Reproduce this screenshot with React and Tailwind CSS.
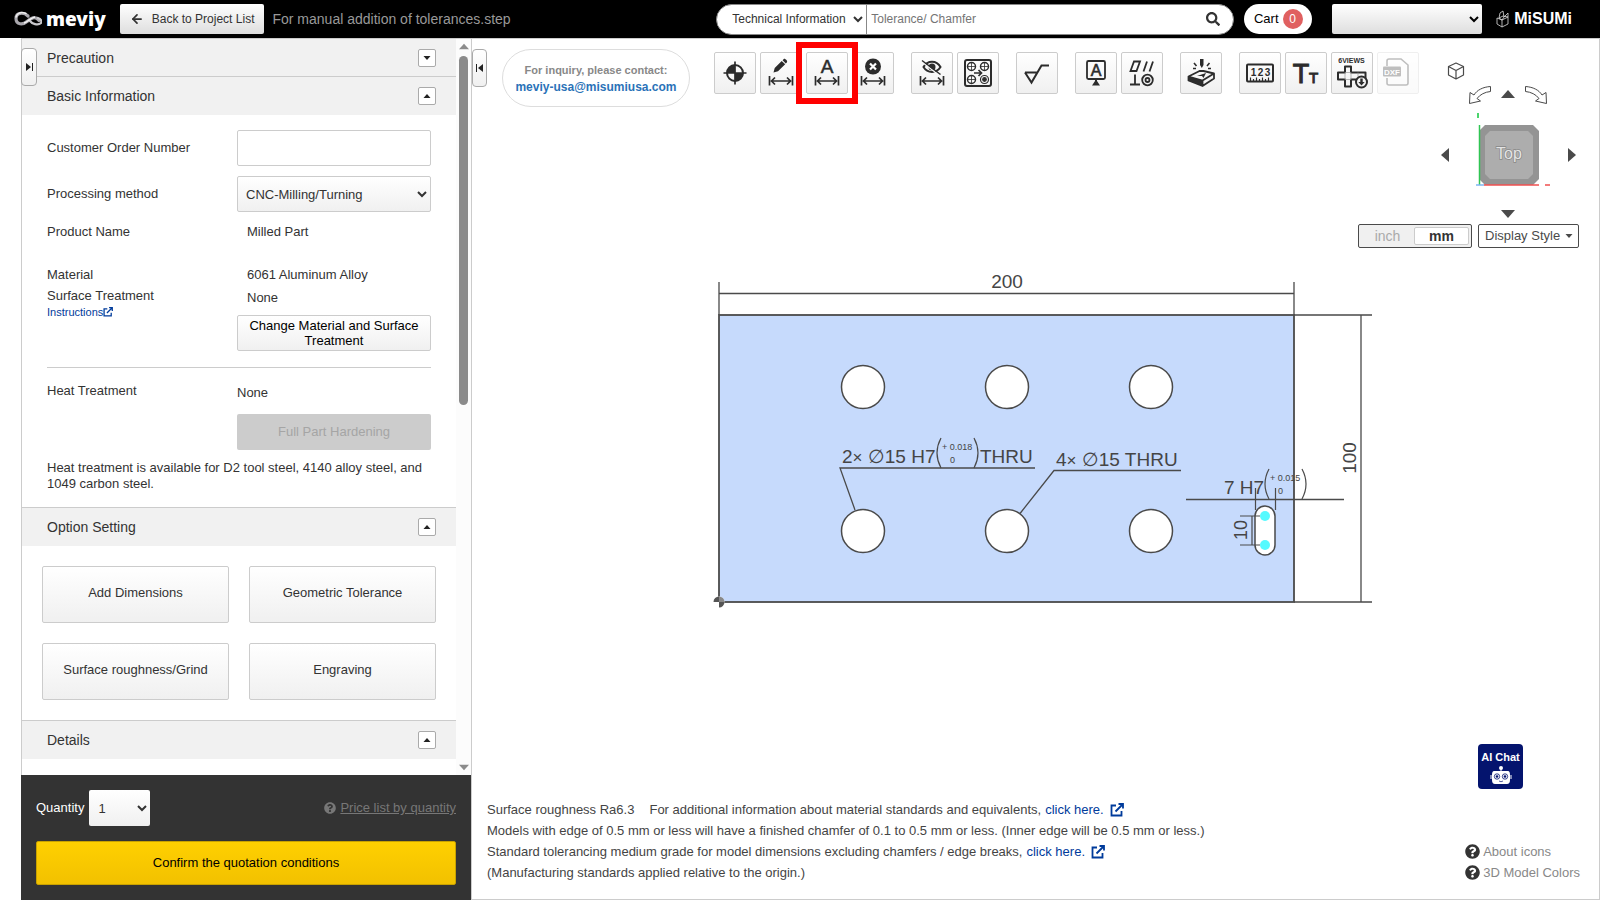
import { useState } from "react";
import { FaSearch, FaQuestionCircle } from "react-icons/fa";
import { ArrowLeft } from "lucide-react";
import clsx from "clsx";

const GRADIENT = "bg-linear-to-b from-white to-[#f0f0f0] border border-[#ccc] rounded-xs";

function Triangle({ dir = "up", className }) {
    const points = {
        up: "0,8 7,0 14,8",
        down: "0,0 14,0 7,8",
        left: "8,0 8,14 0,7",
        right: "0,0 8,7 0,14",
    };
    const vertical = dir === "up" || dir === "down";
    return (
        <svg viewBox={vertical ? "0 0 14 8" : "0 0 8 14"} className={className} fill="currentColor" aria-hidden="true">
            <polygon points={points[dir]} />
        </svg>
    );
}

function OpenIcon({ className }) {
    return (
        <svg viewBox="0 0 14 14" className={className} fill="none" stroke="currentColor" strokeWidth="1.800" aria-hidden="true">
            <path d="M6 2.500H1.500v10h10V8M5.500 8.500l7-7M8.500 1H13v4.500" />
        </svg>
    );
}

function MeviyLogo() {
    return (
        <a href="#" className="flex items-center gap-1 text-white" aria-label="meviy home">
            <svg viewBox="0 0 28 16" className="w-7 h-4" fill="none" aria-hidden="true">
                <path d="M14 5C10 1 2 1 2 7.500s7 6.500 11 3 8-6 12-1" stroke="#a9a7ad" strokeWidth="3.200" strokeLinecap="round" />
                <path d="M12 2.500C7 .5 3 2 2 6" stroke="#eee" strokeWidth="1.500" strokeLinecap="round" />
                <path d="M15 9c3 4 9 6 12 3 1-2 0-4-3-5" stroke="#c9c8cc" strokeWidth="2.200" strokeLinecap="round" />
                <path d="M10 12c4-1 6-5 11-6" stroke="#f4f4f4" strokeWidth="1.400" />
            </svg>
            <span className="font-['Noto_Sans'] font-black text-[19px] leading-5">meviy</span>
        </a>
    );
}

function MisumiLogo() {
    return (
        <a href="#" className="flex items-center gap-1 text-white" aria-label="MISUMI">
            <svg viewBox="0 0 14 18" className="w-[14px] h-[18px]" fill="none" stroke="#ddd" strokeWidth="0.800" aria-hidden="true">
                <path d="M1 8l5 2v7l-5-3zM6 10l6-3v7l-6 3M4 3l3-2 1 6-2 3-3-2zM8 7l4-4v4M3 8l4-2 5 1" />
            </svg>
            <span className="font-bold text-base leading-5">MiSUMi</span>
        </a>
    );
}

function Header() {
    return (
        <header className="h-[38px] shrink-0 bg-black flex items-center pl-[14px] pr-7">
            <MeviyLogo />
            <button className="ml-[14px] h-[30px] px-[10px] flex items-center gap-2 rounded-xs bg-linear-to-b from-white to-[#dedede] text-xs text-[#333]">
                <ArrowLeft size={14} strokeWidth={3} />
                Back to Project List
            </button>
            <span className="ml-2 text-sm text-[#999]">For manual addition of tolerances.step</span>
            <div className="ml-auto flex items-center">
                <form className="w-[518px] h-[31px] flex items-center bg-white border border-[#888] rounded-full overflow-hidden" onSubmit={(e) => e.preventDefault()}>
                    <select aria-label="Search category" className="w-[150px] h-full pl-[11px] pr-[2px] text-xs text-[#333] border-r border-[#888]">
                        <option>Technical Information</option>
                    </select>
                    <input type="text" aria-label="Search" placeholder="Tolerance/ Chamfer" className="flex-1 h-full px-1 text-xs outline-none placeholder:text-[#757575]" />
                    <button aria-label="Run search" className="px-[13px] text-[#333]">
                        <FaSearch size={14} />
                    </button>
                </form>
                <a href="#" className="ml-[10px] h-[30px] w-[68px] flex items-center justify-center gap-1 rounded-full bg-white text-[13px] text-black">
                    Cart
                    <span className="w-5 h-5 rounded-full bg-[#e06060] text-white text-xs flex items-center justify-center">0</span>
                </a>
                <select aria-label="Account" className="ml-5 w-[150px] h-[30px] px-[6px] rounded-xs bg-linear-to-b from-white to-[#dedede] text-[13px]">
                    <option></option>
                </select>
                <div className="ml-[14px]">
                    <MisumiLogo />
                </div>
            </div>
        </header>
    );
}

function SectionHeader({ title, open, onToggle, first }) {
    return (
        <div className={clsx("pl-[25px] pr-5 flex items-center justify-between bg-[#f1f1f1]", first ? "h-[37px]" : "h-[39px] border-t border-[#ccc]")}>
            <h2 className="text-sm text-[#333]">{title}</h2>
            <button onClick={onToggle} aria-label={`Toggle ${title}`} className="w-[18px] h-[18px] flex items-center justify-center bg-white border border-[#aaa] rounded-xs text-[#222]">
                <Triangle dir={open ? "up" : "down"} className="w-2 h-1" />
            </button>
        </div>
    );
}

function BasicInformation() {
    return (
        <div className="px-[25px] py-[15px] text-[13px] leading-4 text-[#333]">
            <div className="grid grid-cols-[190px_1fr] items-center">
                <label htmlFor="order-number">Customer Order Number</label>
                <input id="order-number" type="text" className="h-9 w-full px-2 border border-[#ccc] rounded-xs" />
            </div>
            <div className="mt-[10px] grid grid-cols-[190px_1fr] items-center">
                <label htmlFor="method">Processing method</label>
                <select id="method" className={`h-9 w-full pl-1 pr-2 ${GRADIENT}`}>
                    <option>CNC-Milling/Turning</option>
                </select>
            </div>
            <div className="mt-3 grid grid-cols-[190px_1fr]">
                <span>Product Name</span>
                <span className="pl-[10px]">Milled Part</span>
            </div>
            <div className="mt-[27px] grid grid-cols-[190px_1fr]">
                <div>
                    <p>Material</p>
                    <p className="mt-[5px]">Surface Treatment</p>
                    <a href="#" className="mt-px flex items-center text-[11px] leading-[14px] text-[#003b9b]">
                        Instructions
                        <OpenIcon className="w-[10px] h-[10px]" />
                    </a>
                </div>
                <div>
                    <p className="pl-[10px]">6061 Aluminum Alloy</p>
                    <p className="mt-[7px] pl-[10px]">None</p>
                    <button className={`mt-[9px] h-9 w-full px-2 leading-[15px] text-black ${GRADIENT}`}>
                        Change Material and Surface Treatment
                    </button>
                </div>
            </div>
            <hr className="mt-4 border-[#ccc]" />
            <div className="mt-[15px] grid grid-cols-[190px_1fr]">
                <span>Heat Treatment</span>
                <div>
                    <p className="mt-[2px]">None</p>
                    <button disabled className="mt-[13px] h-9 w-full rounded-xs bg-[#ccc] text-[#a5a5a5]">
                        Full Part Hardening
                    </button>
                </div>
            </div>
            <p className="mt-[10px]">Heat treatment is available for D2 tool steel, 4140 alloy steel, and 1049 carbon steel.</p>
        </div>
    );
}

const options = ["Add Dimensions", "Geometric Tolerance", "Surface roughness/Grind", "Engraving"];

function Sidebar() {
    const [open, setOpen] = useState({ precaution: false, basic: true, option: true, details: true });
    const toggle = (key) => setOpen({ ...open, [key]: !open[key] });

    return (
        <aside className="relative w-[450px] shrink-0 flex flex-col border-l border-t border-[#ccc]">
            <div className="flex-1 min-h-0 flex">
                <div className="flex-1 overflow-hidden">
                    <SectionHeader first title="Precaution" open={open.precaution} onToggle={() => toggle("precaution")} />
                    <SectionHeader title="Basic Information" open={open.basic} onToggle={() => toggle("basic")} />
                    {open.basic && <BasicInformation />}
                    <SectionHeader title="Option Setting" open={open.option} onToggle={() => toggle("option")} />
                    {open.option && (
                        <div className="p-5 grid grid-cols-2 gap-5">
                            {options.map((name) => (
                                <button key={name} className={`h-[57px] pb-1 text-[13px] text-[#333] ${GRADIENT}`}>
                                    {name}
                                </button>
                            ))}
                        </div>
                    )}
                    <SectionHeader title="Details" open={open.details} onToggle={() => toggle("details")} />
                </div>
                {/* scroll rail */}
                <div className="w-[15px] flex flex-col items-center justify-between bg-[#fcfcfc] text-[#8b8b8b] py-1">
                    <div className="flex flex-col items-center gap-[6px] h-[362px]">
                        <Triangle dir="up" className="w-[10px] h-[7px]" />
                        <div className="w-[9px] flex-1 rounded-full bg-[#8b8b8b]" />
                    </div>
                    <Triangle dir="down" className="w-[10px] h-[7px]" />
                </div>
            </div>
            <footer className="-ml-px bg-[#333] p-[15px]">
                <div className="flex items-center text-[13px] text-white">
                    <label htmlFor="quantity">Quantity</label>
                    <select id="quantity" className="ml-[5px] w-[61px] h-9 px-[5px] rounded-xs bg-linear-to-b from-white to-[#f0f0f0] text-[#333]">
                        <option>1</option>
                    </select>
                    <a href="#" className="ml-auto flex items-center gap-1 text-[#777]">
                        <FaQuestionCircle size={12} />
                        <span className="underline">Price list by quantity</span>
                    </a>
                </div>
                <button className="mt-[15px] w-full h-11 rounded-xs border border-[#c9a200] bg-linear-to-b from-[#ffd000] to-[#f2c100] text-[13px] text-black">
                    Confirm the quotation conditions
                </button>
            </footer>
            <button aria-label="Collapse panel" className={`absolute -left-px top-[9px] w-4 h-[38px] flex items-center justify-center text-[#222] rounded-sm! border-[#aaa]! ${GRADIENT}`}>
                <svg viewBox="0 0 7 8" className="w-[7px] h-2" fill="currentColor"><path d="M0 0l5 4-5 4zM6 0h1v8H6z" /></svg>
            </button>
        </aside>
    );
}

const DimensionMark = () => (
    <path d="M9.500 24v9.500M32.500 24v9.500M11 29h20M15 25.500L11.500 29l3.500 3.500M27 25.500l3.500 3.500-3.500 3.500" fill="none" stroke="currentColor" strokeWidth="1.700" />
);

function IconText({ children, ...props }) {
    return (
        <text textAnchor="middle" fill="currentColor" stroke="none" {...props}>
            {children}
        </text>
    );
}

const icons = {
    origin: (
        <>
            <circle cx="21" cy="21" r="8" fill="none" stroke="currentColor" strokeWidth="2" />
            <path d="M21 21v-8a8 8 0 0 0-8 8zM21 21v8a8 8 0 0 0 8-8z" />
            <path d="M21 9.500v23M9.500 21h23" stroke="currentColor" strokeWidth="1.700" />
        </>
    ),
    edit: (
        <>
            <path d="M13.500 20.500l1.200-4.500 7-7 3.500 3.300-7.200 7zM22.600 8.200l1.200-1.200c1-1 4.200 2 3.200 3.200l-1.200 1.200z" />
            <DimensionMark />
        </>
    ),
    auto: (
        <>
            <IconText x="21" y="20.500" fontSize="19" strokeWidth="0.500" stroke="currentColor">A</IconText>
            <DimensionMark />
        </>
    ),
    remove: (
        <>
            <circle cx="21" cy="14.500" r="8" />
            <path d="M18 11.500l6 6M24 11.500l-6 6" stroke="#fff" strokeWidth="2.200" />
            <DimensionMark />
        </>
    ),
    hide: (
        <>
            <path d="M12.500 15c4-7 13-7 17 0-4 6.500-13 6.500-17 0z" fill="none" stroke="currentColor" strokeWidth="2" />
            <circle cx="21" cy="15" r="3.500" />
            <path d="M11 10l17.500 13.500" stroke="#f7f7f7" strokeWidth="1.500" />
            <path d="M11 8.500l18.500 14" stroke="currentColor" strokeWidth="1.500" />
            <DimensionMark />
        </>
    ),
    pattern: (
        <g fill="none" stroke="currentColor" strokeWidth="1.200">
            <rect x="8" y="8" width="26" height="26" rx="2" strokeWidth="2" />
            <circle cx="14.500" cy="14.500" r="4" strokeWidth="1.500" />
            <circle cx="27.500" cy="14.500" r="4" strokeWidth="1.500" />
            <circle cx="14.500" cy="27.500" r="4" strokeWidth="1.500" />
            <circle cx="27.500" cy="27.500" r="4" />
            <circle cx="27.500" cy="27.500" r="1.800" fill="currentColor" />
            <path d="M14.500 10v9M10 14.500h9M27.500 10v9M23 14.500h9M14.500 23v9M10 27.500h9" strokeWidth="0.800" />
            <path d="M17 21h7M21.500 18l3 3-3 3" strokeWidth="1.700" />
        </g>
    ),
    roughness: <path d="M9 20.500h12.500M9 20.500l6.500 10L25.500 13.500H33" fill="none" stroke="currentColor" strokeWidth="2" />,
    datum: (
        <>
            <rect x="12" y="9" width="18" height="18" rx="1.500" fill="none" stroke="currentColor" strokeWidth="1.800" />
            <IconText x="21" y="24" fontSize="16" stroke="currentColor" strokeWidth="0.600">A</IconText>
            <path d="M20 27h2v2l3 4.500h-8l3-4.500z" />
        </>
    ),
    geometric: (
        <g fill="none" stroke="currentColor" strokeWidth="1.800">
            <path d="M9.500 19l3.500-9.500h6L15.500 19zM22.500 19.500l3.500-10M28.500 19.500l3.500-10M14 22.500V32M9 32.500h10" />
            <circle cx="26.500" cy="28" r="5.300" />
            <circle cx="26.500" cy="28" r="2" />
        </g>
    ),
    engrave: (
        <>
            <path d="M20 7h3.500v6l-1.700 3-1.800-3z" />
            <path d="M14 11l2.500 3M29.500 11L27 14M16 16.500h-3M28 16.500h3" stroke="currentColor" strokeWidth="1.600" />
            <path d="M8.500 24.500l11-5.500h4L34 21.500 22.500 28.500zM8.500 24.500v4L22.500 34 34 26.500v-5M22.500 28.500V34" fill="none" stroke="currentColor" strokeWidth="1.800" strokeLinejoin="round" />
            <path d="M8.500 24.500l14 4V34l-14-5.500z" />
            <path d="M17 24l9-3-2.500 5-1.500-2z" />
        </>
    ),
    measure: (
        <>
            <rect x="8" y="12.500" width="26" height="17" rx="1" fill="none" stroke="currentColor" strokeWidth="2" />
            {["1", "2", "3"].map((n, i) => (
                <IconText key={n} x={14.5 + i * 7} y="23.500" fontSize="10" fontWeight="bold">{n}</IconText>
            ))}
            <path d="M11.500 25.500v4M14.500 27v2.500M17.500 25.500v4M20.500 27v2.500M23.500 25.500v4M26.500 27v2.500M29.500 25.500v4" stroke="currentColor" strokeWidth="1.200" />
        </>
    ),
    text: (
        <g stroke="currentColor" strokeWidth="1">
            <IconText x="16" y="30.500" fontSize="27" stroke="currentColor">T</IconText>
            <IconText x="28.500" y="30.500" fontSize="15" stroke="currentColor">T</IconText>
        </g>
    ),
    views: (
        <>
            <IconText x="20.500" y="11" fontSize="7" fontWeight="bold">6VIEWS</IconText>
            <path d="M14 14.500h6v6h14.500v7H20v7h-6v-7H7v-7h7z" fill="none" stroke="currentColor" strokeWidth="2" strokeLinejoin="round" />
            <path d="M14 20.500h6v7h-6zM27 20.500v7" fill="none" stroke="#999" strokeWidth="0.700" />
            <circle cx="30.500" cy="30" r="5.500" fill="#f4f4f4" stroke="currentColor" strokeWidth="2" />
            <path d="M29.300 26.500h2.400v3.500h2l-3.200 3.500-3.200-3.500h2z" />
        </>
    ),
    dxf: (
        <>
            <path d="M10 14V9q0-2 2-2h12l7 6v18q0 2-2 2H12q-2 0-2-2v-5" fill="none" stroke="currentColor" strokeWidth="1.600" />
            <rect x="6" y="14.500" width="18" height="10" rx="1" />
            <text x="15" y="22.500" textAnchor="middle" fontSize="8" fontWeight="bold" fill="#fff">DXF</text>
        </>
    ),
};

const toolGroups = [
    [
        { id: "origin", label: "Set origin" },
        { id: "edit", label: "Edit dimension" },
        { id: "auto", label: "Add tolerance", active: true },
        { id: "remove", label: "Delete dimension" },
    ],
    [
        { id: "hide", label: "Hide dimensions" },
        { id: "pattern", label: "Hole pattern" },
    ],
    [{ id: "roughness", label: "Surface roughness" }],
    [
        { id: "datum", label: "Datum" },
        { id: "geometric", label: "Geometric tolerance" },
    ],
    [{ id: "engrave", label: "Engraving" }],
    [
        { id: "measure", label: "Measure" },
        { id: "text", label: "Text size" },
        { id: "views", label: "Six views" },
        { id: "dxf", label: "Export DXF", disabled: true },
    ],
];

function Toolbar() {
    return (
        <div className="flex gap-[17px]">
            {toolGroups.map((group) => (
                <div key={group[0].id} className="flex gap-1">
                    {group.map((tool) => (
                        <div key={tool.id} className="relative">
                            <button
                                aria-label={tool.label}
                                disabled={tool.disabled}
                                className={clsx("block w-[42px] h-[42px] text-[#2c2c2c] disabled:opacity-30", GRADIENT)}
                            >
                                <svg viewBox="1 1 40 40" className="w-10 h-10" fill="currentColor" fontFamily="Liberation Sans, sans-serif">
                                    {icons[tool.id]}
                                </svg>
                            </button>
                            {tool.active && <span className="absolute -inset-[10px] z-10 border-6 border-[#f00] pointer-events-none" />}
                        </div>
                    ))}
                </div>
            ))}
        </div>
    );
}

function ViewCube() {
    return (
        <svg viewBox="0 0 76 64" className="w-[76px] h-16" role="img" aria-label="Top view">
            <path d="M10 2h48l6 6v48l-6 6H10l-6-6V8z" fill="#949494" />
            <path d="M15 8h38l5 5v38l-5 5H15l-5-5V13z" fill="#adadad" />
            <text x="34" y="36" textAnchor="middle" fontSize="16" fill="#e4e4e4" stroke="#888" strokeWidth="1.500" paintOrder="stroke" fontFamily="Liberation Sans, sans-serif">Top</text>
            <path d="M4.500 2v60" stroke="#2fc552" strokeWidth="1.500" />
            <path d="M1 62h8" stroke="#7eb6f2" strokeWidth="1.500" />
            <path d="M9 62h55M70 62h5" stroke="#f05050" strokeWidth="1.500" />
        </svg>
    );
}

function CurvedArrow({ flip }) {
    return (
        <svg viewBox="0 0 24 20" className={clsx("w-6 h-5", flip && "-scale-x-100")} fill="#fff" stroke="#4a4a4a" strokeWidth="1">
            <path d="M22.500 1.500C15 2 9 5 6 10L2 7.500 1.500 18.500 12.500 16 9 13.500c3-4 8-6.500 13.500-7z" />
        </svg>
    );
}

function ViewControls() {
    const [unit, setUnit] = useState("mm");
    return (
        <div className="mt-[13px] w-[222px] flex flex-col items-end text-[#4a4a4a]">
            <div className="w-[142px] flex flex-col">
                <button aria-label="Isometric view" className="ml-[10px] w-[18px] h-[18px]">
                    <svg viewBox="0 0 18 18" className="w-[18px] h-[18px]" fill="none" stroke="currentColor" strokeWidth="1.200" strokeLinejoin="round">
                        <path d="M9 1l7.500 3.500v8.500L9 17l-7.500-4V4.500zM1.500 4.500L9 8.500l7.500-4M9 8.500V17" />
                    </svg>
                </button>
                <div className="mt-[5px] flex items-start justify-center gap-[9px]">
                    <button aria-label="Rotate left"><CurvedArrow /></button>
                    <button aria-label="Rotate up" className="mt-[5px]"><Triangle dir="up" className="w-[14px] h-2" /></button>
                    <button aria-label="Rotate right"><CurvedArrow flip /></button>
                </div>
                <span className="ml-10 mt-2 w-[2px] h-[5px] bg-[#4bd56c]" />
                <div className="mt-[5px] flex items-center justify-between pl-1 pr-[3px]">
                    <button aria-label="Turn left"><Triangle dir="left" className="w-2 h-[14px]" /></button>
                    <div className="ml-2"><ViewCube /></div>
                    <button aria-label="Turn right"><Triangle dir="right" className="w-2 h-[14px]" /></button>
                </div>
                <button aria-label="Rotate down" className="mt-[23px] mx-auto"><Triangle dir="down" className="w-[14px] h-2" /></button>
            </div>
            <div className="mt-[6px] flex gap-[6px] text-sm">
                <div className="w-[114px] h-6 p-[2px] flex rounded-xs border border-[#4a4a4a] bg-[#f0f0f0]">
                    {["inch", "mm"].map((u) => (
                        <button
                            key={u}
                            onClick={() => setUnit(u)}
                            className={clsx("flex-1 leading-4 rounded-xs", unit === u ? "bg-white border border-[#ccc] font-bold text-[#333]" : "text-[#aaa]")}
                        >
                            {u}
                        </button>
                    ))}
                </div>
                <button className="w-[101px] h-6 pl-[6px] pr-[5px] flex items-center justify-between rounded-xs border border-[#4a4a4a] bg-white text-[13px]">
                    Display Style
                    <Triangle dir="down" className="w-2 h-1" />
                </button>
            </div>
        </div>
    );
}

const holes = [863, 1007, 1151].flatMap((x) => [387, 531].map((y) => ({ x, y })));

function Tolerance({ x, y, value }) {
    return (
        <g>
            <path d={`M${x + 4} ${y - 25}q-8 15 0 30M${x + 37} ${y - 25}q8 15 0 30`} fill="none" strokeWidth="1.200" />
            <g stroke="none" fontSize="9">
                <text x={x + 5} y={y - 13}>+ {value}</text>
                <text x={x + 13} y={y}>0</text>
            </g>
        </g>
    );
}

function Drawing() {
    return (
        <svg viewBox="685 260 700 360" className="w-[700px] h-[360px]" fill="#454545" stroke="#4a4a4a" fontFamily="Liberation Sans, sans-serif" fontSize="19" role="img" aria-label="Part drawing">
            <rect x="719" y="315" width="575" height="287" fill="#c6dafc" strokeWidth="1.800" />
            {holes.map(({ x, y }) => (
                <circle key={`${x}-${y}`} cx={x} cy={y} r="21.500" fill="#fff" strokeWidth="1.500" />
            ))}
            <rect x="1255" y="506" width="20" height="49" rx="10" fill="#fff" strokeWidth="1.500" />

            {/* overall dimensions */}
            <path d="M719 282v33M1294 282v33M719 293.500h575M1294 315h78M1294 602h78M1361 315v287" fill="none" strokeWidth="1.300" />
            <g stroke="none">
                <text x="1007" y="288" textAnchor="middle">200</text>
                <text transform="translate(1356 458) rotate(-90)" textAnchor="middle">100</text>
                <text x="842" y="463">2<tspan fontSize="17">×</tspan> ∅15 H7</text>
                <text x="980" y="463">THRU</text>
                <text x="1056" y="466">4<tspan fontSize="17">×</tspan> ∅15 THRU</text>
                <text x="1224" y="494">7 H7</text>
                <text transform="translate(1247 530) rotate(-90)" textAnchor="middle" fontSize="18">10</text>
            </g>

            {/* leaders */}
            <path d="M1035 468H840l15 42M1181 470.500h-127l-34 43M1186 499.500h158" fill="none" strokeWidth="1.300" />
            <path d="M1255.500 488v22M1275.500 488v22M1240 516h20M1240 545h20M1252 516v29" fill="none" strokeWidth="1.200" />
            <Tolerance x={937} y={463} value="0.018" />
            <Tolerance x={1265} y={494} value="0.015" />

            <g stroke="none">
                <circle cx="1265" cy="516" r="5" fill="#55faff" />
                <circle cx="1265" cy="545" r="5" fill="#55faff" />
                <circle cx="719" cy="602" r="5.500" fill="#fff" />
                <path d="M719 602v-5.500a5.500 5.500 0 0 0-5.500 5.500zM719 602v5.500a5.500 5.500 0 0 0 5.500-5.500z" fill="#555" />
                <path d="M719 602v-5.500a5.500 5.500 0 0 1 5.500 5.500z" fill="#888" />
            </g>
        </svg>
    );
}

function AiChatButton() {
    return (
        <button className="w-[45px] h-[45px] flex flex-col items-center rounded-sm bg-[#04146e] text-white pt-[5px]">
            <span className="font-bold text-[11px] leading-4 whitespace-nowrap">AI Chat</span>
            <svg viewBox="0 0 22 20" className="w-[22px] h-5" aria-hidden="true">
                <circle cx="11" cy="3" r="2" fill="#fff" />
                <path d="M10.500 4h1v3h-1z" fill="#fff" />
                <path d="M4 6h14q2 0 2 4v5q0 4-3 4H5q-3 0-3-4v-5q0-4 2-4zM.5 10h1v4h-1zM20.500 10h1v4h-1z" fill="#fff" />
                <circle cx="7" cy="11.500" r="2.700" fill="#fff" stroke="#04146e" strokeWidth="0.800" />
                <circle cx="15" cy="11.500" r="2.700" fill="#fff" stroke="#04146e" strokeWidth="0.800" />
                <circle cx="7" cy="11.500" r="1.300" fill="#04146e" />
                <circle cx="15" cy="11.500" r="1.300" fill="#04146e" />
                <path d="M9 16q2 1.500 4 0" fill="none" stroke="#04146e" strokeWidth="0.700" />
            </svg>
        </button>
    );
}

function NoteLink() {
    return (
        <a href="#" className="inline-flex items-center gap-[6px] ml-1 text-[#003b9b] align-top">
            click here.
            <OpenIcon className="w-[14px] h-[14px]" />
        </a>
    );
}

function Workspace() {
    return (
        <main className="relative flex-1 min-w-0 flex flex-col border border-[#ccc]">
            <button aria-label="Collapse side panel" className={`absolute left-0 top-[10px] w-[15px] h-[38px] flex items-center justify-center text-[#222] rounded-sm! border-[#aaa]! ${GRADIENT}`}>
                <svg viewBox="0 0 7 8" className="w-[7px] h-2" fill="currentColor"><path d="M7 0L2 4l5 4zM0 0h1v8H0z" /></svg>
            </button>
            <div className="flex items-start pl-[30px] pr-5 pt-[10px]">
                <div className="w-[188px] h-[58px] shrink-0 flex flex-col items-center justify-center rounded-full border border-[#ddd] font-bold leading-[18px] whitespace-nowrap">
                    <span className="text-[11px] text-[#888]">For inquiry, please contact:</span>
                    <a href="mailto:meviy-usa@misumiusa.com" className="text-xs text-[#2a72b8]">meviy-usa@misumiusa.com</a>
                </div>
                <div className="ml-6 mt-[3px]">
                    <Toolbar />
                </div>
                <div className="flex-1 flex justify-end -ml-[70px]">
                    <ViewControls />
                </div>
            </div>
            <div className="mt-3 pr-[2px] flex justify-center">
                <Drawing />
            </div>
            <div className="mt-auto flex justify-end pr-[76px]">
                <AiChatButton />
            </div>
            <div className="mt-[10px] mb-4 pl-[15px] pr-[19px] flex items-end justify-between text-[13px] leading-[21px] text-[#444]">
                <div>
                    <p>
                        <span className="mr-[15px]">Surface roughness Ra6.3</span>
                        For additional information about material standards and equivalents,
                        <NoteLink />
                    </p>
                    <p>Models with edge of 0.5 mm or less will have a finished chamfer of 0.1 to 0.5 mm or less. (Inner edge will be 0.5 mm or less.)</p>
                    <p>
                        Standard tolerancing medium grade for model dimensions excluding chamfers / edge breaks,
                        <NoteLink />
                    </p>
                    <p>(Manufacturing standards applied relative to the origin.)</p>
                </div>
                <div className="flex flex-col text-[#888]">
                    {["About icons", "3D Model Colors"].map((label) => (
                        <a key={label} href="#" className="flex items-center gap-[3px]">
                            <FaQuestionCircle size={15} className="text-[#333]" />
                            {label}
                        </a>
                    ))}
                </div>
            </div>
        </main>
    );
}

export default function App() {
    return (
        <div className="h-screen flex flex-col bg-white font-['Liberation_Sans',Arial,sans-serif]">
            <Header />
            <div className="flex-1 min-h-0 flex pl-[21px]">
                <Sidebar />
                <Workspace />
            </div>
        </div>
    );
}
